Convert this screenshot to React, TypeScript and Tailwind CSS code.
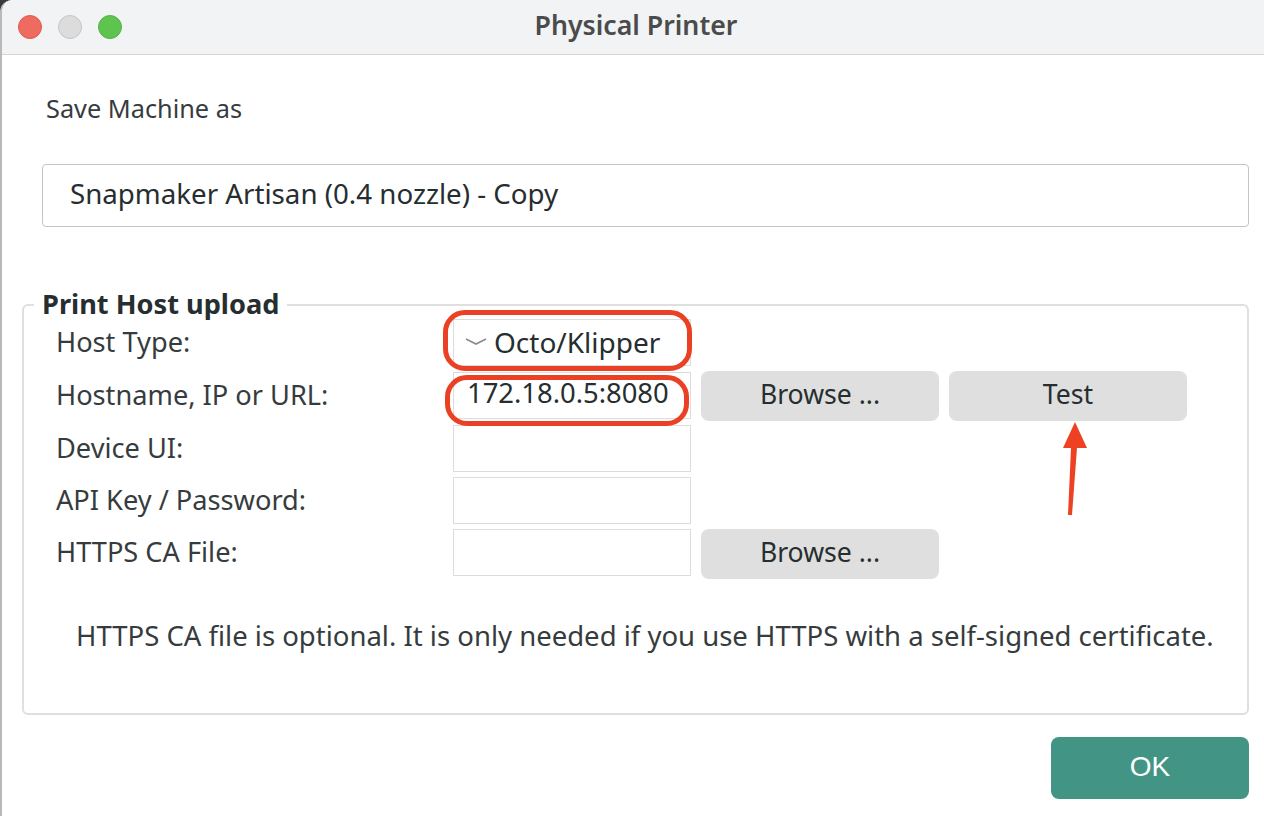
const font = "font-['Noto_Sans',sans-serif]";

function Field({ children }: { children?: React.ReactNode }) {
  return (
    <div className="w-[238px] h-[47px] border border-[#dcdcdc] bg-white flex items-center text-[27.4px] text-[#262e30] shrink-0">
      {children}
    </div>
  );
}

function GrayButton({ label, offset = "mt-[2px]" }: { label: string; offset?: string }) {
  return (
    <button className={`w-[238px] h-[50px] pb-[2px] rounded-lg bg-[#dfdfdf] text-[26.6px] text-[#262e30] shrink-0 ${offset}`}>
      {label}
    </button>
  );
}

function Row({ label, children, h }: { label: string; children: React.ReactNode; h: string }) {
  return (
    <div className={`flex items-center ${h}`}>
      <div className="w-[429px] pl-[32px] text-[27.2px] text-[#363c3e] shrink-0">{label}</div>
      <div className="flex items-center gap-[10px]">{children}</div>
    </div>
  );
}

export default function App() {
  return (
    <div className={`w-[1264px] h-[816px] overflow-hidden bg-[#3a3a3a] ${font}`}>
      <div className="w-full h-full bg-white rounded-t-xl border-l-2 border-[#b9b9b9] relative">
        {/* Title bar */}
        <div className="h-[55px] bg-[#f1f3f5] border-b border-[#d5d5d5] rounded-tl-xl flex items-center relative">
          <div className="flex items-center gap-[16px] pl-[16px]">
            <span className="w-6 h-6 rounded-full bg-[#ef6a5f] border border-[#dc5b50]" />
            <span className="w-6 h-6 rounded-full bg-[#dcdcdc] border border-[#c6c6c6]" />
            <span className="w-6 h-6 rounded-full bg-[#5ec44f] border border-[#53b346]" />
          </div>
          <div className="absolute inset-0 flex items-center justify-center pb-[4px] pl-[6px] text-[26.7px] font-semibold text-[#4b4b4b]">
            Physical Printer
          </div>
        </div>

        <div className="pl-[20px] pr-[14px]">
          <div className="pl-[24px] pt-[34px] text-[25.3px] leading-[38px] text-[#363c3e]">Save Machine as</div>

          <div className="mt-[37px] ml-[20px] h-[63px] w-[1207px] border border-[#c4c4c4] rounded flex items-center pl-[27px] pb-[4px] text-[27.7px] text-[#262e30]">
            Snapmaker Artisan (0.4 nozzle) - Copy
          </div>

          {/* Print Host upload */}
          <div className="relative mt-[77px] h-[411px] w-[1227px] border-2 border-[#dfdfdf] rounded-md pt-[9px]">
            <div className="absolute -top-[21px] left-[10px] bg-white px-2 text-[27.2px] leading-[38px] font-bold text-[#262e30]">
              Print Host upload
            </div>

            <Row label="Host Type:" h="h-[54px]">
              <Field>
                <svg className="ml-[11px] mr-[7px]" width="22" height="10" viewBox="0 0 22 10" fill="none">
                  <path d="M1 2 L11 7 L21 2" stroke="#8a8a8a" strokeWidth="1.6" />
                </svg>
                <span className="text-[28px]">Octo/Klipper</span>
              </Field>
            </Row>
            <Row label="Hostname, IP or URL:" h="h-[52px]">
              <Field>
                <span className="pl-[13px] pb-[4px]">172.18.0.5:8080</span>
              </Field>
              <GrayButton label="Browse ..." />
              <GrayButton label="Test" />
            </Row>
            <Row label="Device UI:" h="h-[53px] pt-[1px]">
              <Field />
            </Row>
            <Row label="API Key / Password:" h="h-[52px]">
              <Field />
            </Row>
            <Row label="HTTPS CA File:" h="h-[52px]">
              <Field />
              <GrayButton label="Browse ..." offset="mt-[4px]" />
            </Row>

            <div className="mt-[40px] pl-[52px] text-[27.5px] leading-[36px] text-[#363c3e] whitespace-nowrap">
              HTTPS CA file is optional. It is only needed if you use HTTPS with a self-signed certificate.
            </div>
          </div>

          <div className="mt-[22px] w-[1227px] flex justify-end">
            <button className="w-[198px] h-[62px] pb-[3px] rounded-lg bg-[#429585] text-white text-[28px] font-['Liberation_Sans',sans-serif]">
              OK
            </button>
          </div>
        </div>

        {/* Red annotations */}
        <div className="absolute left-[441px] top-[310px] w-[249px] h-[61px] border-[5px] border-[#ea4125] rounded-[22px]" />
        <div className="absolute left-[443px] top-[375px] w-[244px] h-[51px] border-[5px] border-[#ea4125] rounded-[22px]" />
        <svg className="absolute left-[1050px] top-[420px]" width="40" height="100" viewBox="0 0 40 100" fill="none">
          <path d="M23 2 L35 28 L11 28 Z" fill="#ee4123" />
          <path d="M20 95 L25 28 L19 28 L16 95 Z" fill="#ee4123" />
        </svg>
      </div>
    </div>
  );
}
